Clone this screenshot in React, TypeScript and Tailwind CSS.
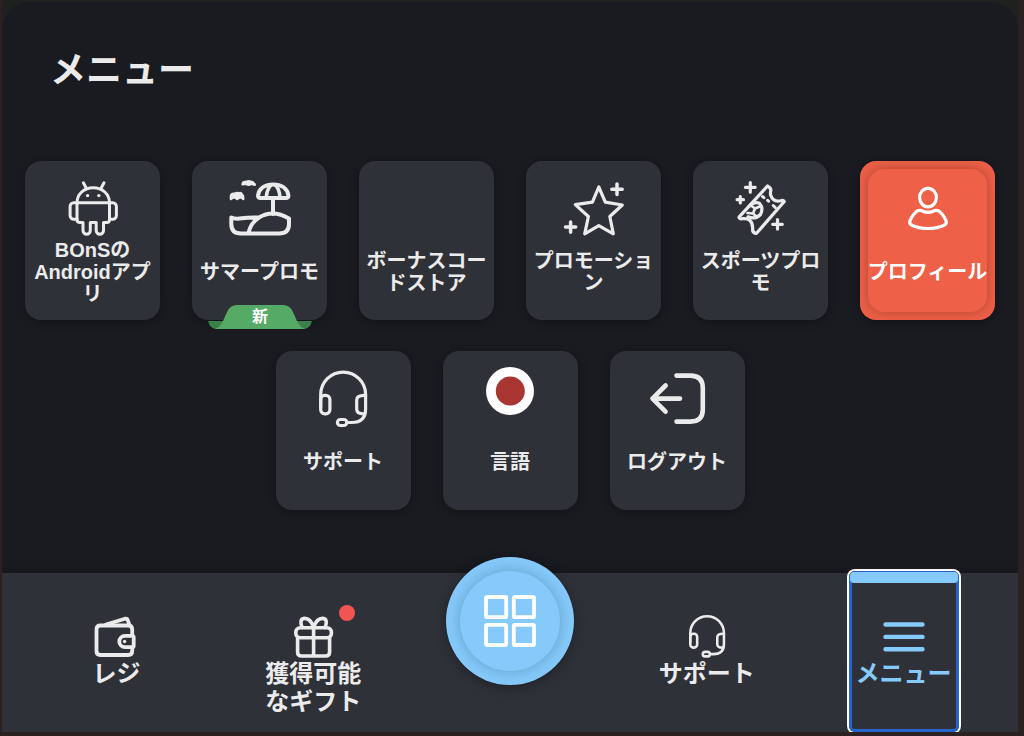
import type { ReactNode } from "react";

function Drawing({ children, width = 3 }: { children: ReactNode; width?: number }) {
  return (
    <svg
      viewBox="0 0 64 64"
      className="size-16 shrink-0"
      fill="none"
      stroke="currentColor"
      strokeWidth={width}
      strokeLinecap="round"
      strokeLinejoin="round"
      aria-hidden="true"
    >
      {children}
    </svg>
  );
}

function NavDrawing({ children, width = 3.4 }: { children: ReactNode; width?: number }) {
  return (
    <svg
      viewBox="0 0 48 48"
      className="size-12 shrink-0"
      fill="none"
      stroke="currentColor"
      strokeWidth={width}
      strokeLinecap="round"
      strokeLinejoin="round"
      aria-hidden="true"
    >
      {children}
    </svg>
  );
}

const android = (
  <Drawing width={3}>
    <path d="M16 27.8C16 19 23 12.8 32.2 12.8S48.5 19 48.5 27.8z" />
    <path d="M16 27.8V44.5q0 3 3 3h3V55.500a3.600 3.600 0 0 0 7.300 0V47.500h5.900V55.500a3.600 3.600 0 0 0 7.300 0V47.500h3q3 0 3-3V27.800" />
    <path d="M16 27.800h-3.200a3.700 3.700 0 0 0-3.700 3.700v9a3.700 3.700 0 0 0 3.700 3.700H16M48.500 27.800h3.200a3.700 3.700 0 0 1 3.700 3.700v9a3.700 3.700 0 0 1-3.700 3.700H48.500M22.400 7.800l3.200 6M43 7.800l-3.200 6" />
    <g fill="currentColor" stroke="none">
      <circle cx="26.600" cy="20.600" r="1.700" />
      <circle cx="37.800" cy="20.600" r="1.700" />
    </g>
  </Drawing>
);

const beach = (
  <Drawing width={4}>
    <path d="M30 20.500C31 13 37.500 9.400 45.200 9.400S59.500 13 60.400 20.500Q60.500 23 58 23H32.500Q29.800 23 30 20.500z" />
    <path d="M38.200 22.500Q39 14 43 10M52 22.500Q51.500 14 47.400 10" strokeWidth="3.600" />
    <path d="M45 23V39" />
    <path d="M3.300 42.500Q7 44.500 14 43.300T31 42.500Q45 34 61 43.500V49Q61 58.500 51 58.500H13Q3.300 58.500 3.300 49zM31 42.500Q22.500 48 20.500 58" />
    <path
      d="M2.900 24V21Q3.500 18.300 6.500 18.800 9 17.300 10.700 18.300 13 17.500 14 19.500 15.300 20 15.300 24L12.500 22 9.200 24 6 22zM14.500 9.300Q15 6.500 18 7 20.500 5.600 22.500 6.700 25 6.500 25.800 8.500 27 9 26.800 9.800L24 8.800 20.600 9.800 17.500 8.800z"
      strokeWidth="2.400"
      fill="currentColor"
    />
  </Drawing>
);

const star = (
  <Drawing width={3.200}>
    <path d="M36.800 12 43.300 27.200 60.300 30 47.800 41.500 51.300 58.800 36.800 50.700 22.700 58.800 26.400 41.500 13.300 29.600 30.400 27.200z" />
    <path d="M55 9v10.400M49.800 14.200h10.400M8.600 47v10.200M3.500 52.100h10.200" strokeWidth="3.500" />
  </Drawing>
);

const ticket = (
  <Drawing width={3.200}>
    <path d="M38.500 11 10 42.200q.6 2 3.400 1.500 10-1.200 10.300 9.500-.8 4.500 3.600 5.300L55.300 26.500q-1-1.700-3.600-.8-7.500 1.800-10.200-6-.2-2.500.4-4.700-.8-2.800-3.400-4z" />
    <path d="M20 31.500q4.500-5.300 10.500-3.300 4.200 4.800 1 11.300-5.500 5.500-12.500 2.300" />
    <path d="M22 30.500 26 33.500 32 31M26 33.500 24 38.500 18.500 38M24 38.500 28 42" strokeWidth="2.700" />
    <path d="M33.500 21.500l1.400 1.200M38.600 25.300l1 .9M44.200 30.500l2 2" strokeWidth="3" />
    <path d="M21.300 7.500v9.700M16.400 12.300h9.800M11.300 21.500v6.400M8.100 24.700h6.400M48.500 44.500v9.600M43.700 49.300h9.600" />
  </Drawing>
);

const profile = (
  <Drawing width={3.200}>
    <ellipse cx="32" cy="22.600" rx="8.400" ry="9.300" />
    <path d="M25 35.500Q32 39.300 39 35.500 42.500 35.200 44.500 37.300 47.800 40.500 50 45.500 51 48.500 48.600 50 41.500 53.500 32 53.500T15.400 50Q13 48.500 14 45.500 16.200 40.500 19.500 37.300 21.500 35.200 25 35.500z" />
  </Drawing>
);

const headsetPaths = (
  <>
    <path d="M9.700 42V29.500a22.450 22.450 0 0 1 44.900 0V44q0 13.500-14 13.500H36" />
    <rect x="9.700" y="30.400" width="9.200" height="18.400" rx="4" />
    <path d="M54.600 30.400h-1.200q-7.700 0-7.700 4.600v9.200q0 4.600 7 4.600h1" />
    <rect x="26.400" y="54.500" width="9.400" height="6" rx="3" />
  </>
);

const logout = (
  <Drawing width={4.600}>
    <path d="M31.500 10.600H45.500q12.300 0 12.300 12.300V44.300q0 12.300-12.300 12.300H31.500" />
    <path d="M35 33.600H7.500M20.600 20.500 7.500 33.600 20.600 46.700" />
  </Drawing>
);

const flag = (
  <Drawing>
    <circle cx="32" cy="26" r="24" fill="#fff" stroke="none" />
    <circle cx="32.300" cy="26" r="14.500" fill="#a93533" stroke="none" />
  </Drawing>
);

type Tile = { label: string; icon: ReactNode; badge?: string; active?: boolean };

const tiles: Tile[] = [
  { label: "BOnSのAndroidアプリ", icon: android },
  { label: "サマープロモ", icon: beach, badge: "新" },
  { label: "ボーナスコードストア", icon: <div className="h-16" /> },
  { label: "プロモーション", icon: star },
  { label: "スポーツプロモ", icon: ticket },
  { label: "プロフィール", icon: profile, active: true },
  { label: "サポート", icon: <Drawing width={3.200}>{headsetPaths}</Drawing> },
  { label: "言語", icon: flag },
  { label: "ログアウト", icon: logout },
];

function Badge({ text }: { text: string }) {
  return (
    <span className="absolute -bottom-[9px] left-4 flex h-6 w-[104px] items-center justify-center text-base leading-none text-white">
      <svg viewBox="0 0 104 24" className="absolute inset-0 size-full" aria-hidden="true">
        <path d="M0 16H104Q102 24 95 24H9Q2 24 0 16z" fill="#3d7f49" />
        <path d="M6 24Q12 23 15 16L19 7Q22 0 29 0H75Q82 0 85 7L89 16Q92 23 98 24z" fill="#55aa65" />
      </svg>
      <span className="relative">{text}</span>
    </span>
  );
}

function MenuTile({ label, icon, badge, active }: Tile) {
  return (
    <li>
      <button
        type="button"
        className={
          active
            ? "relative block h-[159px] w-[135px] rounded-2xl bg-[#ee6047] p-2 text-white shadow-[0_2px_10px_rgba(0,0,0,0.3)]"
            : "relative flex h-[159px] w-[135px] flex-col items-center rounded-2xl bg-[#2e3138] px-1.5 pt-3.5 text-[#ebebeb] shadow-[0_2px_10px_rgba(0,0,0,0.3)]"
        }
      >
        {active ? (
          <span className="flex h-full flex-col items-center rounded-2xl bg-[#ee6047] pt-1.5 shadow-[0_0_12px_rgba(60,20,10,0.35)]">
            {icon}
            <span className="flex h-[66px] items-center whitespace-nowrap text-xl leading-[22px]">{label}</span>
          </span>
        ) : (
          <>
            {icon}
            <span className="flex h-[66px] items-center text-center text-xl leading-[22px] [line-break:loose]">{label}</span>
          </>
        )}
        {badge && <Badge text={badge} />}
      </button>
    </li>
  );
}

function NavItem({ label, icon, dot }: { label: string; icon: ReactNode; dot?: boolean }) {
  return (
    <a href="#" className="flex flex-1 flex-col items-center gap-px pt-[38px]">
      <span className="relative">
        {icon}
        {dot && <span className="absolute -right-[18px] -top-1.5 size-4 rounded-full bg-[#f0554f]" />}
      </span>
      <span className="w-24 text-center text-2xl leading-7">{label}</span>
    </a>
  );
}

export default function App() {
  return (
    <div className="flex min-h-screen flex-col overflow-hidden bg-[#2b2122] pb-1 pl-0.5 pr-1.5 font-['Liberation_Sans','Noto_Sans_CJK_JP',sans-serif] font-bold text-[#ebebeb]">
      <div className="flex grow flex-col overflow-hidden bg-[#1f211f] pt-0.5">
        <main className="grow rounded-t-[28px] bg-[#191b20] pt-[42px]">
          <h1 className="pl-12 text-4xl leading-[54px]">メニュー</h1>
          <ul className="mt-[63px] flex flex-wrap justify-center gap-x-8 gap-y-[31px]">
            {tiles.map((tile) => (
              <MenuTile key={tile.label} {...tile} />
            ))}
          </ul>
        </main>

        <nav className="flex h-[159px] shrink-0 bg-[#2e3138] px-4 shadow-[0_-2px_12px_rgba(0,0,0,0.2)]">
          <NavItem
            label="レジ"
            icon={
              <NavDrawing width={3.800}>
                <path d="M40.200 23V18.500q0-4-4-4H8.500q-4 0-4 4V40q0 4 4 4H36.200q4 0 4-4V36.500" />
                <path d="M40.200 24.800H33a5.700 5.700 0 0 0 0 11.400h7.200q1.500 0 1.500-1.500V26.300q0-1.500-1.500-1.500zM14 13.500 33 7.700q2.400-.3 3 2L37.300 14" />
                <circle cx="32.600" cy="30.500" r="1.700" fill="currentColor" stroke="none" />
              </NavDrawing>
            }
          />
          <NavItem
            label="獲得可能なギフト"
            dot
            icon={
              <NavDrawing width={3.600}>
                <rect x="6.800" y="16.800" width="35.600" height="10" rx="4.500" />
                <path d="M8.600 27V41q0 4 4 4H36.600q4 0 4-4V27M24.600 17V45" />
                <path d="M24.600 16.500C22.500 10 18.500 7.200 15.200 7.400 11.500 7.700 11 12 13.200 16.500M24.600 16.500C26.700 10 30.700 7.200 34 7.400 37.700 7.700 38.200 12 36 16.500" />
              </NavDrawing>
            }
          />
          <div className="flex flex-1 justify-center">
            <button
              type="button"
              aria-label="ホーム"
              className="-mt-4 flex size-32 items-center justify-center rounded-full bg-[#85cafa] shadow-[0_2px_12px_rgba(0,0,0,0.35)]"
            >
              <span className="flex size-[100px] items-center justify-center rounded-full bg-[#85cafa] shadow-[0_0_14px_rgba(20,60,90,0.3)]">
                <svg viewBox="0 0 52 52" className="size-[52px]" fill="none" stroke="#fff" strokeWidth="3.800" aria-hidden="true">
                  <rect x="2" y="2" width="20.200" height="20.200" rx="1" />
                  <rect x="29.800" y="2" width="20.200" height="20.200" rx="1" />
                  <rect x="2" y="29.800" width="20.200" height="20.200" rx="1" />
                  <rect x="29.800" y="29.800" width="20.200" height="20.200" rx="1" />
                </svg>
              </span>
            </button>
          </div>
          <NavItem
            label="サポート"
            icon={
              <NavDrawing>
                <g transform="scale(.75)" strokeWidth="3.400">{headsetPaths}</g>
              </NavDrawing>
            }
          />
          <div className="flex flex-1 justify-center">
            <a
              href="#"
              className="relative -mt-0.5 flex w-[110px] flex-col items-center gap-px whitespace-nowrap rounded-md border-[3px] border-[#2565cc] pt-[37px] text-[#85cafa] ring-2 ring-white"
            >
              <span className="absolute -inset-x-0.5 -top-0.5 h-[11px] rounded bg-[#85cafa]" />
              <NavDrawing width={4.400}>
                <path d="M5.500 13.500H42.500M5.500 25.900H42.500M5.500 38.200H42.500" />
              </NavDrawing>
              <span className="text-2xl leading-7">メニュー</span>
            </a>
          </div>
        </nav>
      </div>
    </div>
  );
}
